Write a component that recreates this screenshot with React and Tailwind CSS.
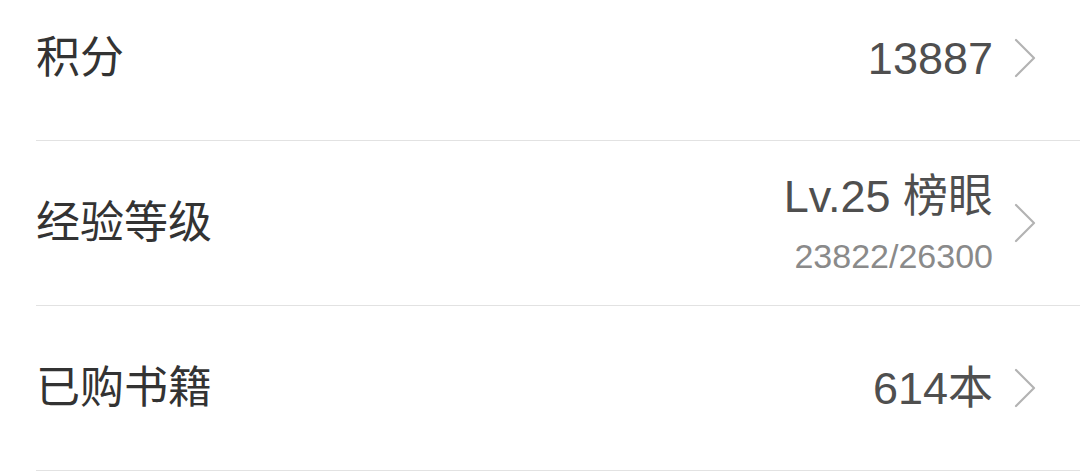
import React from "react";

const ROWS = [
  { label: "积分", value: "13887" },
  { label: "经验等级", value: "Lv.25 榜眼", sub: "23822/26300" },
  { label: "已购书籍", value: "614本" },
];

const Chevron = () => (
  <svg width="24" height="40" viewBox="0 0 24 40" className="shrink-0">
    <path d="M3 2 L21 20 L3 38" fill="none" stroke="#b3b3b3" strokeWidth="2.2" strokeLinecap="round" strokeLinejoin="round" />
  </svg>
);

const App = () => {
  return (
    <div
      className="w-[1080px] h-[472px] overflow-hidden bg-white"
      style={{ fontFamily: '"Liberation Sans", "Noto Sans CJK SC", sans-serif' }}
    >
      <div className="-mt-[24px] pl-[36px]">
        {ROWS.map((row) => (
          <div
            key={row.label}
            className="h-[165px] flex items-center justify-between border-b border-[#e2e2e2] pr-[43px]"
          >
            <span className="text-[44px] leading-none text-[#333333]">{row.label}</span>
            <div className="flex items-center gap-[20px]">
              <div className="flex flex-col items-end">
                <span className="text-[45px] leading-none text-[#4f4f4f]">{row.value}</span>
                {row.sub && (
                  <span className="text-[34px] leading-none text-[#8a8a8a] mt-[20px]">{row.sub}</span>
                )}
              </div>
              <Chevron />
            </div>
          </div>
        ))}
      </div>
    </div>
  );
};

export default App;
